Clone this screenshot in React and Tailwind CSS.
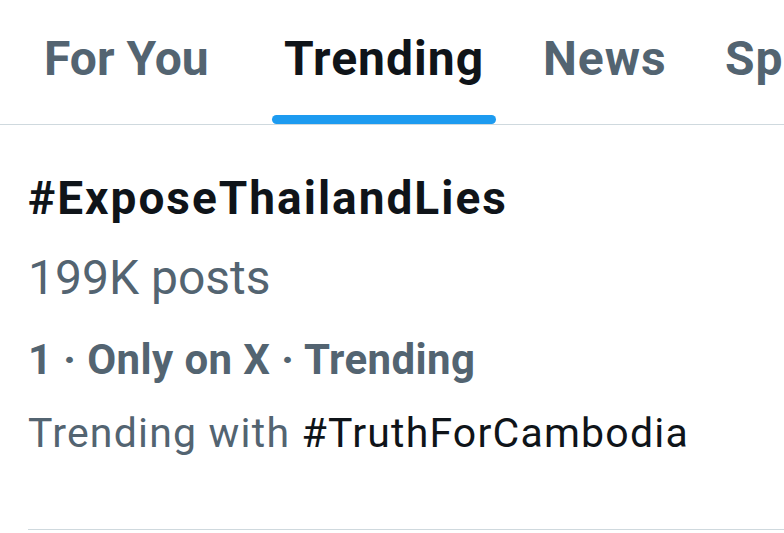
export default function App() {
  return (
    <div className="w-[784px] h-[533px] overflow-hidden bg-white" style={{ fontFamily: 'Roboto, "Liberation Sans", sans-serif' }}>
      <div className="flex h-[125px] border-b border-[#cfd9de] whitespace-nowrap overflow-hidden text-[48px] leading-[48px] font-bold text-[#536471]">
        <div className="pl-[44px] pt-[35px] w-[208px] shrink-0">For You</div>
        <div className="ml-[64px] flex flex-col w-[224px] shrink-0">
          <div className="pt-[35px] text-center text-[#0f1419] tracking-[1px]">Trending</div>
          <div className="mt-auto h-[9px] rounded-full bg-[#1d9bf0]"></div>
        </div>
        <div className="ml-[47px] pt-[35px] tracking-[1px] w-[122px] shrink-0">News</div>
        <div className="ml-[60px] pt-[35px] tracking-[1px]">Sports</div>
      </div>
      <div className="ml-[28px] flex flex-col border-b border-[#cfd9de] pb-[75px] whitespace-nowrap">
        <div className="mt-[50px] text-[46px] leading-[46px] font-bold text-[#0f1419] tracking-[2px]">#ExposeThailandLies</div>
        <div className="mt-[33px] text-[48px] leading-[48px] text-[#536471]">199K posts</div>
        <div className="mt-[37px] text-[42px] leading-[42px] font-bold text-[#536471] tracking-[0.4px]">1 · Only on X · Trending</div>
        <div className="mt-[32px] text-[41px] leading-[41px] text-[#536471] tracking-[1.2px]">
          Trending with <span className="text-[#0f1419]">#TruthForCambodia</span>
        </div>
      </div>
    </div>
  );
}
